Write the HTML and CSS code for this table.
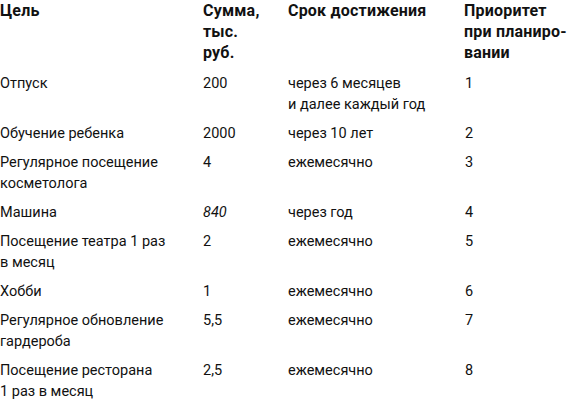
FILE: index.html
```html
<!DOCTYPE html>
<html lang="ru">
<head>
<meta charset="utf-8">
<title>Цели</title>
<link rel="stylesheet" href="styles.css">
</head>
<body>
<table class="goals">
  <colgroup>
    <col class="c-goal"><col class="c-sum"><col class="c-term"><col class="c-prio">
  </colgroup>
  <thead>
    <tr>
      <th>Цель</th>
      <th>Сумма,<br>тыс.<br>руб.</th>
      <th>Срок достижения</th>
      <th>Приоритет<br>при планиро-<br>вании</th>
    </tr>
  </thead>
  <tbody>
    <tr><td>Отпуск</td><td>200</td><td>через 6 месяцев<br>и далее каждый год</td><td>1</td></tr>
    <tr><td>Обучение ребенка</td><td>2000</td><td>через 10 лет</td><td>2</td></tr>
    <tr><td>Регулярное посещение<br>косметолога</td><td>4</td><td>ежемесячно</td><td>3</td></tr>
    <tr><td>Машина</td><td><i>840</i></td><td>через год</td><td>4</td></tr>
    <tr><td>Посещение театра 1 раз<br>в месяц</td><td>2</td><td>ежемесячно</td><td>5</td></tr>
    <tr><td>Хобби</td><td>1</td><td>ежемесячно</td><td>6</td></tr>
    <tr><td>Регулярное обновление<br>гардероба</td><td>5,5</td><td>ежемесячно</td><td>7</td></tr>
    <tr><td>Посещение ресторана<br>1 раз в месяц</td><td>2,5</td><td>ежемесячно</td><td>8</td></tr>
  </tbody>
</table>
</body>
</html>
```
FILE: styles.css
```css
html, body {
  margin: 0;
  padding: 0;
  background: #ffffff;
}
body {
  font-family: Roboto, "Liberation Sans", sans-serif;
  color: #111111;
}
.goals {
  width: 570px;
  border-collapse: collapse;
  table-layout: fixed;
}
.c-goal { width: 203px; }
.c-sum { width: 85px; }
.c-term { width: 176px; }
.c-prio { width: 106px; }
.goals th {
  text-align: left;
  vertical-align: top;
  font-weight: 700;
  font-size: 16px;
  line-height: 21px;
  letter-spacing: 0.2px;
  padding: 0 0 10px 0;
  white-space: nowrap;
}
.goals td {
  vertical-align: top;
  font-size: 14.5px;
  line-height: 21px;
  padding: 0 0 8px 0;
  white-space: nowrap;
}
.goals td:nth-child(4) {
  padding-left: 1px;
}
.goals i {
  font-style: italic;
}
```
